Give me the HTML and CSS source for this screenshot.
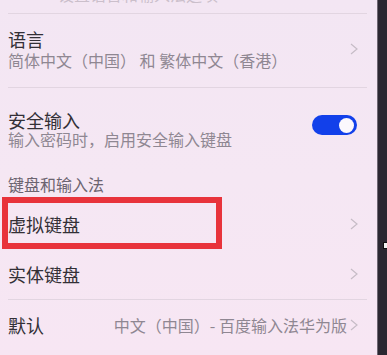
FILE: index.html
```html
<!DOCTYPE html>
<html lang="zh-CN">
<head>
<meta charset="utf-8">
<link rel="stylesheet" href="styles.css">
</head>
<body>
<div class="screen">
  <main class="list">
    <div class="stub"><span class="stub-text">设置语言和输入法选项</span></div>
    <div class="divider"></div>

    <div class="row row-lang">
      <div class="texts">
        <div class="title">语言</div>
        <div class="sub">简体中文（中国） 和 繁体中文（香港）</div>
      </div>
      <svg class="chev" viewBox="0 0 8 12" width="8" height="12"><polyline points="1,1 7,6 1,11" /></svg>
    </div>
    <div class="divider"></div>

    <div class="row row-secure">
      <div class="texts">
        <div class="title">安全输入</div>
        <div class="sub">输入密码时，启用安全输入键盘</div>
      </div>
      <div class="toggle"><span class="knob"></span></div>
    </div>

    <div class="section">键盘和输入法</div>

    <div class="row row-single">
      <div class="title">虚拟键盘</div>
      <svg class="chev" viewBox="0 0 8 12" width="8" height="12"><polyline points="1,1 7,6 1,11" /></svg>
    </div>
    <div class="row row-single">
      <div class="title">实体键盘</div>
      <svg class="chev" viewBox="0 0 8 12" width="8" height="12"><polyline points="1,1 7,6 1,11" /></svg>
    </div>
    <div class="divider"></div>
    <div class="row row-single">
      <div class="title">默认</div>
      <div class="value">中文（中国）- 百度输入法华为版</div>
      <svg class="chev chev-tight" viewBox="0 0 8 12" width="8" height="12"><polyline points="1,1 7,6 1,11" /></svg>
    </div>

    <div class="highlight"></div>
  </main>
  <div class="edge"><span class="edge-mark"></span></div>
</div>
</body>
</html>
```
FILE: styles.css
```css
html, body {
  margin: 0;
  padding: 0;
  width: 387px;
  height: 355px;
  overflow: hidden;
  background: #f4e6f2;
}
body {
  font-family: "Noto Sans CJK SC", "Noto Sans", sans-serif;
  color: #333036;
}
.screen {
  display: flex;
  width: 387px;
  height: 355px;
}
.list {
  position: relative;
  flex: 1;
  padding-left: 8px;
  padding-right: 10px;
  background: linear-gradient(180deg, #f3e6f3 0%, #f5e7f3 50%, #f7e6f3 100%);
}
.stub {
  height: 13px;
  overflow: hidden;
  padding-left: 50px;
}
.stub-text {
  display: block;
  font-size: 16px;
  line-height: 18px;
  color: #cbbfcb;
  margin-top: -15px;
}
.divider {
  height: 1px;
  background: #e2d5e1;
}
.row {
  display: flex;
  padding-right: 9px;
}
.texts {
  flex: 1;
}
.title {
  font-size: 18px;
  line-height: 22px;
  color: #333036;
}
.sub {
  font-size: 16px;
  line-height: 22px;
  color: #8f8792;
}
.row-lang {
  height: 73px;
  box-sizing: border-box;
  padding-top: 14px;
  align-items: flex-start;
}
.row-lang .sub {
  margin-top: -1px;
}
.row-lang .chev {
  margin-top: 15px;
}
.row-secure {
  padding-top: 22px;
  padding-right: 10px;
  align-items: flex-start;
}
.row-secure .title,
.row-secure .sub {
  line-height: 20px;
}
.row-secure .sub {
  margin-top: -1px;
}
.section {
  font-size: 16px;
  line-height: 22px;
  color: #6c6470;
  margin-top: 24px;
  margin-bottom: 4px;
}
.row-single {
  height: 50px;
  align-items: center;
}
.row-single .title {
  flex: none;
}
.value {
  flex: 1;
  text-align: right;
  font-size: 16px;
  line-height: 22px;
  color: #8f8792;
  margin-right: 3px;
}
.chev {
  flex: none;
  margin-left: auto;
  fill: none;
  stroke: #c6bcc6;
  stroke-width: 1.2;
}
.chev-tight {
  margin-left: 0;
}
.toggle {
  flex: none;
  width: 45px;
  height: 20px;
  border-radius: 10px;
  background: #1240ea;
  display: flex;
  align-items: center;
  justify-content: flex-end;
  padding-right: 3px;
  box-sizing: border-box;
  margin-top: 5px;
}
.knob {
  width: 15px;
  height: 15px;
  border-radius: 50%;
  background: #fbf8fd;
}
.highlight {
  position: absolute;
  left: 2px;
  top: 197px;
  width: 208px;
  height: 40px;
  border: 6px solid #e8333b;
}
.edge {
  position: relative;
  width: 9px;
  flex: none;
  background: #2b2731;
  border-left: 1px solid #6f6873;
}
.edge-mark {
  position: absolute;
  left: 5px;
  top: 242px;
  width: 3px;
  height: 5px;
  border: 1px solid #111;
  background: #f2f2f2;
}
```
